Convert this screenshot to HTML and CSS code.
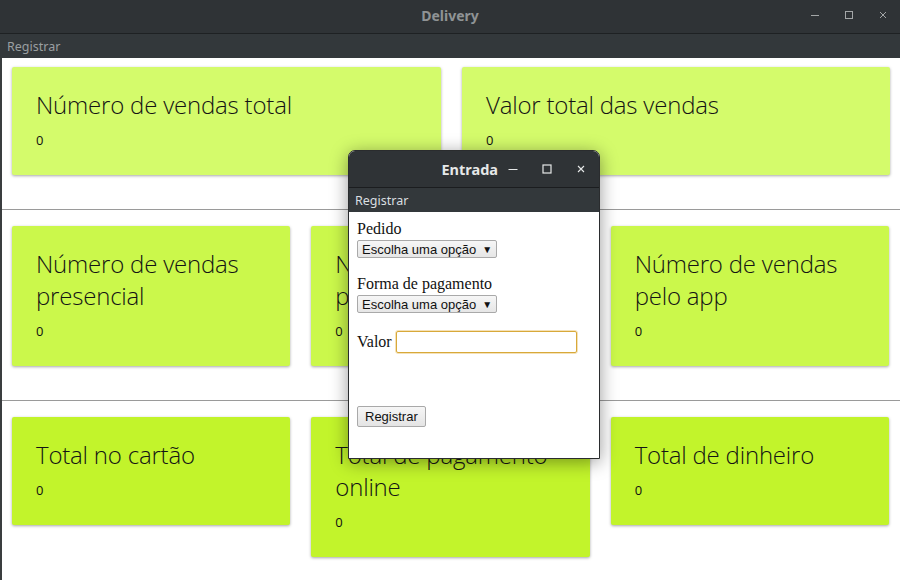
FILE: index.html
```html
<!DOCTYPE html>
<html lang="pt">
<head>
<meta charset="utf-8">
<title>Delivery</title>
<link rel="stylesheet" href="styles.css">
</head>
<body>
<div class="window">
  <header class="titlebar">
    <span class="title">Delivery</span>
    <div class="controls">
      <svg width="10" height="10" viewBox="0 0 10 10"><path d="M1 5.5h8" stroke="currentColor" stroke-width="1"/></svg>
      <svg width="10" height="10" viewBox="0 0 10 10"><rect x="1.5" y="1.5" width="7" height="7" fill="none" stroke="currentColor" stroke-width="1"/></svg>
      <svg width="10" height="10" viewBox="0 0 10 10"><path d="M2 2l6 6M8 2l-6 6" stroke="currentColor" stroke-width="1"/></svg>
    </div>
  </header>
  <nav class="menubar">Registrar</nav>
  <main class="content">
    <section class="row two">
      <div class="card c1"><h2>Número de vendas total</h2><p>0</p></div>
      <div class="card c1"><h2>Valor total das vendas</h2><p>0</p></div>
    </section>
    <section class="row three">
      <div class="card c2"><h2>Número de vendas presencial</h2><p>0</p></div>
      <div class="card c2"><h2>Número de vendas pelo telefone</h2><p>0</p></div>
      <div class="card c2"><h2>Número de vendas pelo app</h2><p>0</p></div>
    </section>
    <section class="row three last">
      <div class="card c3"><h2>Total no cartão</h2><p>0</p></div>
      <div class="card c3"><h2>Total de pagamento online</h2><p>0</p></div>
      <div class="card c3"><h2>Total de dinheiro</h2><p>0</p></div>
    </section>
  </main>

  <div class="dialog">
    <header class="dtitlebar">
      <span class="dtitle">Entrada</span>
      <div class="dcontrols">
        <svg width="10" height="10" viewBox="0 0 10 10"><path d="M0.5 5.5h9" stroke="currentColor" stroke-width="1.2"/></svg>
        <svg width="10" height="10" viewBox="0 0 10 10"><rect x="1" y="1" width="8" height="8" fill="none" stroke="currentColor" stroke-width="1.2"/></svg>
        <svg width="10" height="10" viewBox="0 0 10 10"><path d="M2 2l6 6M8 2l-6 6" stroke="currentColor" stroke-width="1.1"/></svg>
      </div>
    </header>
    <nav class="dmenubar">Registrar</nav>
    <form class="dform">
      <label class="flabel">Pedido</label>
      <div class="sel"><span>Escolha uma opção</span><span class="arrow">▼</span></div>
      <label class="flabel second">Forma de pagamento</label>
      <div class="sel"><span>Escolha uma opção</span><span class="arrow">▼</span></div>
      <div class="valor"><label>Valor</label><input class="vinput" type="text"></div>
      <button class="btn" type="button">Registrar</button>
    </form>
  </div>
</div>
</body>
</html>
```
FILE: styles.css
```css
* { box-sizing: border-box; }
html, body { margin: 0; padding: 0; }
body { width: 900px; height: 580px; overflow: hidden; background: #fff; }

.window { position: relative; width: 900px; height: 580px; }

.titlebar {
  height: 34px;
  background: #2f3336;
  border-bottom: 1px solid #1e2123;
  display: flex;
  align-items: center;
  justify-content: center;
  position: relative;
}
.title {
  font-family: "Noto Sans", sans-serif;
  font-weight: bold;
  font-size: 14px;
  color: #8f9395;
  margin-top: -3px;
}
.controls {
  position: absolute;
  right: 12px;
  top: 10px;
  display: flex;
  gap: 24px;
  color: #a3a6a7;
}
.menubar {
  height: 24px;
  background: #33383b;
  color: #9a9fa1;
  font-family: "Noto Sans", sans-serif;
  font-size: 12.5px;
  padding: 4px 0 0 7px;
}

.content {
  border-left: 2px solid #3a3d3f;
  height: 522px;
}
.row {
  display: grid;
  column-gap: 21px;
  padding: 16px 11px 34px 10px;
  border-bottom: 1px solid #9a9a9a;
  align-items: start;
}
.row:first-child { padding-top: 9px; }
.row.last { border-bottom: none; }
.two { grid-template-columns: 429px 1fr; padding-right: 10px; }
.three { grid-template-columns: 1fr 1fr 1fr; }

.card {
  border-radius: 2px;
  box-shadow: 0 1px 3px rgba(0,0,0,0.35);
  padding: 22px 24px 25px 24px;
}
.c1 { background: #d4fb6b; }
.c2 { background: #cbf84b; }
.c3 { background: #c2f42b; }
.card h2 {
  margin: 0;
  font-family: "Open Sans", sans-serif;
  font-weight: 300;
  font-size: 24px;
  line-height: 32px;
  color: #141414;
  letter-spacing: -0.2px;
}
.card p {
  margin: 9px 0 0 0;
  font-family: "Open Sans", sans-serif;
  font-size: 13px;
  line-height: 20px;
  color: #111;
}

.dialog {
  position: absolute;
  left: 348px;
  top: 150px;
  width: 252px;
  height: 309px;
  background: #fff;
  border: 1px solid #2a2c2e;
  border-radius: 7px 7px 0 0;
  box-shadow: 0 3px 18px rgba(0,0,0,0.4);
  overflow: hidden;
}
.dtitlebar {
  height: 37px;
  background: #2f3336;
  border-bottom: 1px solid #1b1d1f;
  display: flex;
  align-items: center;
  justify-content: flex-end;
  padding-right: 13px;
}
.dtitle {
  font-family: "Noto Sans", sans-serif;
  font-weight: bold;
  font-size: 14.5px;
  color: #e6e8e8;
  margin-right: 10px;
}
.dcontrols {
  display: flex;
  gap: 24px;
  color: #e6e8e8;
}
.dmenubar {
  height: 24px;
  background: #33383b;
  color: #dadfe0;
  font-family: "Noto Sans", sans-serif;
  font-size: 12.5px;
  padding: 4px 0 0 6px;
}
.dform {
  padding: 8px 8px;
  font-family: "Liberation Serif", serif;
  font-size: 16px;
  color: #111;
}
.flabel { display: block; line-height: 18px; }
.flabel.second { margin-top: 17px; }
.sel {
  display: inline-flex;
  align-items: center;
  gap: 6px;
  height: 18px;
  padding: 0 4px 0 4px;
  border: 1px solid #a9a9a9;
  border-radius: 2px;
  background: linear-gradient(#f6f6f6, #e6e6e6);
  font-family: "Liberation Sans", sans-serif;
  font-size: 13px;
  color: #111;
  margin-top: 2px;
}
.sel .arrow { font-size: 10px; }
.valor {
  display: flex;
  align-items: center;
  gap: 4px;
  margin-top: 18px;
}
.vinput {
  width: 181px;
  height: 22px;
  border: 1px solid #d8a93a;
  border-radius: 2px;
  outline: 1px solid rgba(224,168,51,0.35);
  font-family: "Liberation Sans", sans-serif;
  font-size: 13px;
}
.btn {
  display: block;
  margin-top: 53px;
  height: 21px;
  padding: 0 7px;
  border: 1px solid #a9a9a9;
  border-radius: 2px;
  background: linear-gradient(#f6f6f6, #e4e4e4);
  font-family: "Liberation Sans", sans-serif;
  font-size: 13px;
  color: #111;
}
```
